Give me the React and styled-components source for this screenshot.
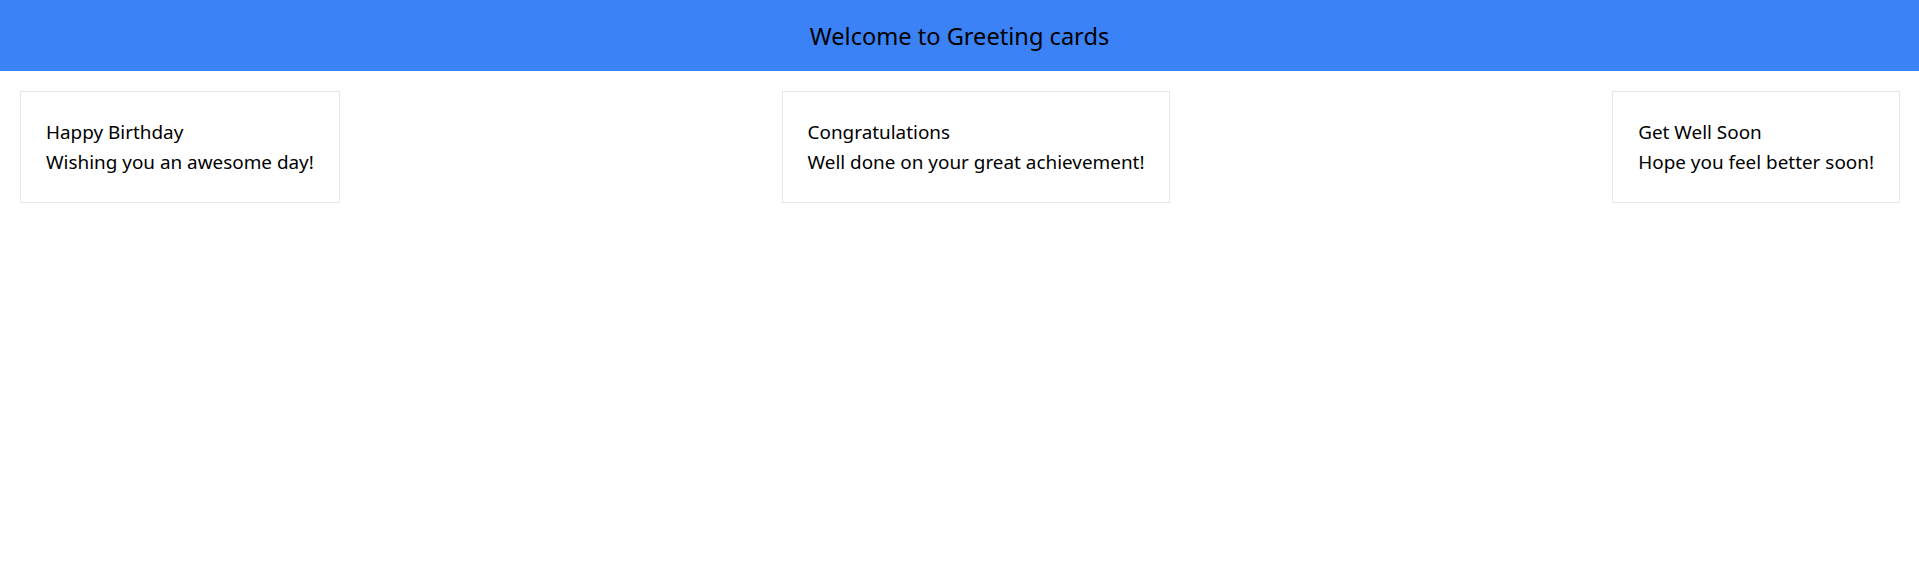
import React from "react";
import styled, { createGlobalStyle } from "styled-components";

const GlobalStyle = createGlobalStyle`
	* {
		box-sizing: border-box;
	}
	body {
		margin: 0;
		font-family: "Noto Sans", "Open Sans", sans-serif;
		color: #000;
		background: #fff;
	}
`;

const cards = [
	{ title: "Happy Birthday", message: "Wishing you an awesome day!" },
	{ title: "Congratulations", message: "Well done on your great achievement!" },
	{ title: "Get Well Soon", message: "Hope you feel better soon!" },
];

const App = () => {
	return (
		<>
			<GlobalStyle />
			<Header>
				<Title>Welcome to Greeting cards</Title>
			</Header>
			<CardList>
				{cards.map((card) => (
					<Card key={card.title}>
						<CardText>{card.title}</CardText>
						<CardText>{card.message}</CardText>
					</Card>
				))}
			</CardList>
		</>
	);
};

export default App;

const Header = styled.header`
	display: flex;
	align-items: center;
	justify-content: center;
	height: 71px;
	background-color: #3b82f6;
`;

const Title = styled.h1`
	margin: 0;
	font-size: 23.6px;
	font-weight: 400;
`;

const CardList = styled.div`
	display: flex;
	justify-content: space-between;
	align-items: flex-start;
	padding: 20px 19px 20px 20px;
`;

const Card = styled.div`
	display: flex;
	flex-direction: column;
	padding: 25px;
	border: 1px solid #e5e7eb;
	background: #fff;
`;

const CardText = styled.p`
	margin: 0;
	font-size: 18.9px;
	line-height: 30px;
`;
